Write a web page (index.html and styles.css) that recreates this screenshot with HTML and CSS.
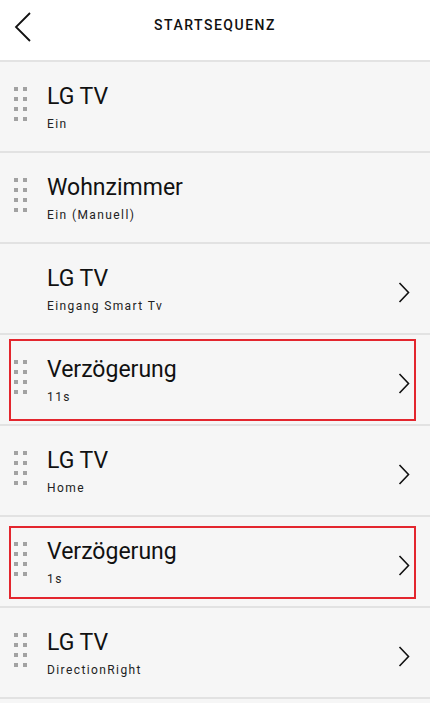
FILE: index.html
```html
<!DOCTYPE html>
<html lang="de">
<head>
<meta charset="utf-8">
<title>Startsequenz</title>
<link rel="stylesheet" href="styles.css">
</head>
<body>
<div class="screen">
  <header class="topbar">
    <button class="back" aria-label="Zurück">
      <svg width="18" height="32" viewBox="0 0 18 32"><path d="M16 2 L2 16 L16 30" fill="none" stroke="#111" stroke-width="1.8"/></svg>
    </button>
    <h1 class="title">STARTSEQUENZ</h1>
  </header>
  <ul class="list">
    <li class="row">
      <span class="handle"><i></i><i></i><i></i><i></i><i></i><i></i><i></i><i></i></span>
      <div class="text"><div class="name">LG TV</div><div class="sub">Ein</div></div>
    </li>
    <li class="row">
      <span class="handle"><i></i><i></i><i></i><i></i><i></i><i></i><i></i><i></i></span>
      <div class="text"><div class="name">Wohnzimmer</div><div class="sub">Ein (Manuell)</div></div>
    </li>
    <li class="row">
      <span class="handle hidden"></span>
      <div class="text"><div class="name">LG TV</div><div class="sub">Eingang Smart Tv</div></div>
      <svg class="chev" width="12" height="21" viewBox="0 0 12 21"><path d="M1.5 1 L10.5 10.5 L1.5 20" fill="none" stroke="#111" stroke-width="1.6"/></svg>
    </li>
    <li class="row">
      <span class="mark mark-a"></span>
      <span class="handle"><i></i><i></i><i></i><i></i><i></i><i></i><i></i><i></i></span>
      <div class="text"><div class="name">Verzögerung</div><div class="sub">11s</div></div>
      <svg class="chev" width="12" height="21" viewBox="0 0 12 21"><path d="M1.5 1 L10.5 10.5 L1.5 20" fill="none" stroke="#111" stroke-width="1.6"/></svg>
    </li>
    <li class="row">
      <span class="handle"><i></i><i></i><i></i><i></i><i></i><i></i><i></i><i></i></span>
      <div class="text"><div class="name">LG TV</div><div class="sub">Home</div></div>
      <svg class="chev" width="12" height="21" viewBox="0 0 12 21"><path d="M1.5 1 L10.5 10.5 L1.5 20" fill="none" stroke="#111" stroke-width="1.6"/></svg>
    </li>
    <li class="row">
      <span class="mark mark-b"></span>
      <span class="handle"><i></i><i></i><i></i><i></i><i></i><i></i><i></i><i></i></span>
      <div class="text"><div class="name">Verzögerung</div><div class="sub">1s</div></div>
      <svg class="chev" width="12" height="21" viewBox="0 0 12 21"><path d="M1.5 1 L10.5 10.5 L1.5 20" fill="none" stroke="#111" stroke-width="1.6"/></svg>
    </li>
    <li class="row">
      <span class="handle"><i></i><i></i><i></i><i></i><i></i><i></i><i></i><i></i></span>
      <div class="text"><div class="name">LG TV</div><div class="sub">DirectionRight</div></div>
      <svg class="chev" width="12" height="21" viewBox="0 0 12 21"><path d="M1.5 1 L10.5 10.5 L1.5 20" fill="none" stroke="#111" stroke-width="1.6"/></svg>
    </li>
  </ul>
</div>
</body>
</html>
```
FILE: styles.css
```css
* { box-sizing: border-box; }
html, body { margin: 0; padding: 0; }
body {
  font-family: Roboto, "Liberation Sans", sans-serif;
  background: #f6f6f6;
  color: #111;
  width: 430px;
  height: 703px;
  overflow: hidden;
}
.screen { width: 430px; }
.topbar {
  position: relative;
  height: 62px;
  background: #fff;
  border-bottom: 2px solid #e3e3e3;
  display: flex;
  align-items: center;
  justify-content: center;
}
.back {
  position: absolute;
  left: 14px;
  top: 11px;
  width: 18px;
  height: 32px;
  padding: 0;
  border: 0;
  background: none;
  display: block;
}
.back svg { display: block; }
.title {
  margin: 0 0 11px 0;
  font-size: 14px;
  font-weight: 500;
  letter-spacing: 1.5px;
  color: #111;
}
.list { list-style: none; margin: 0; padding: 0; }
.row {
  position: relative;
  height: 91px;
  border-bottom: 2px solid #e2e2e2;
  display: flex;
  align-items: center;
  padding: 0 20px 0 14px;
  background: #f6f6f6;
}
.handle {
  width: 13px;
  height: 34px;
  display: grid;
  grid-template-columns: 4px 4px;
  grid-auto-rows: 4px;
  column-gap: 5px;
  row-gap: 6px;
  margin-right: 20px;
  margin-top: -6px;
  flex: none;
}
.handle i { background: #a2a2a2; display: block; }
.handle.hidden { visibility: hidden; }
.text { flex: 1; display: flex; flex-direction: column; margin-top: 2px; }
.name {
  font-size: 23px;
  line-height: 28px;
  font-weight: 400;
  color: #111;
}
.sub {
  font-size: 12px;
  line-height: 16px;
  letter-spacing: 1.4px;
  color: #222;
  margin-top: 5px;
}
.chev { flex: none; display: block; margin-top: 8px; }
.mark {
  position: absolute;
  left: 9px;
  right: 14px;
  border: 2px solid #e3262e;
  pointer-events: none;
}
.mark-a { top: 4px; bottom: 3px; }
.mark-b { top: 9px; bottom: 7px; }
```
